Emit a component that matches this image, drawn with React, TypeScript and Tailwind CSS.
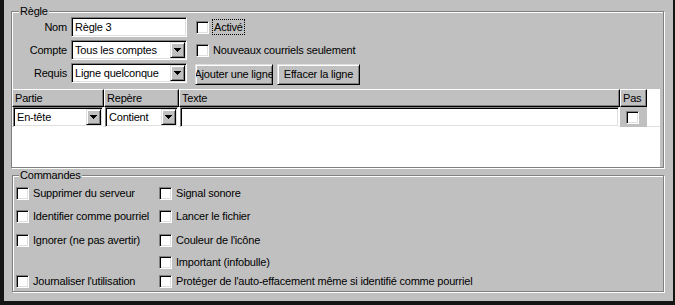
const sunken =
  'border border-t-[#808080] border-l-[#808080] border-b-white border-r-white shadow-[inset_1px_1px_0_#000,inset_-1px_-1px_0_#dfdfdf]';
const raised =
  'border border-t-[#dfdfdf] border-l-[#dfdfdf] border-b-black border-r-black shadow-[inset_1px_1px_0_#fff,inset_-1px_-1px_0_#808080]';
const etched = 'border border-[#808080] shadow-[inset_1px_1px_0_#fff,1px_1px_0_#fff]';

function Check({ className = '' }: { className?: string }) {
  return <span className={`block w-[13px] h-[13px] shrink-0 bg-white ${sunken} ${className}`} />;
}

function Arrow() {
  return (
    <svg width="7" height="4" viewBox="0 0 7 4" shapeRendering="crispEdges">
      <path d="M0 0h7v1h-1v1h-1v1h-1v1h-1v-1h-1v-1h-1v-1h-1z" fill="#000" />
    </svg>
  );
}

function Combo({ value, className = '' }: { value: string; className?: string }) {
  return (
    <div className={`flex h-[20px] bg-white p-[1px] ${sunken} ${className}`}>
      <span className="flex-1 flex items-center pl-[2px] whitespace-nowrap overflow-hidden">{value}</span>
      <span className={`flex items-center justify-center w-[15px] h-full bg-[#c0c0c0] ${raised}`}>
        <Arrow />
      </span>
    </div>
  );
}

function Label({ children }: { children: string }) {
  return <span className="w-[55px] h-[20px] flex items-center justify-end shrink-0">{children}</span>;
}

function Button({ children, width }: { children: string; width: string }) {
  return (
    <div className={`${width} h-[21px] mt-[1px] flex items-center justify-center overflow-hidden whitespace-nowrap bg-[#c0c0c0] ${raised}`}>
      <span className="shrink-0">{children}</span>
    </div>
  );
}

function Option({ label }: { label?: string }) {
  if (!label) return <div className="w-[143px]" />;
  return (
    <div className="w-[143px] h-[13px] flex items-center gap-[4px] whitespace-nowrap">
      <Check />
      <span>{label}</span>
    </div>
  );
}

const commandes: [string | undefined, string, string][] = [
  ['Supprimer du serveur', 'Signal sonore', 'h-[23px]'],
  ['Identifier comme pourriel', 'Lancer le fichier', 'h-[24px]'],
  ['Ignorer (ne pas avertir)', "Couleur de l'icône", 'h-[22px]'],
  [undefined, 'Important (infobulle)', 'h-[19px]'],
  ["Journaliser l'utilisation", "Protéger de l'auto-effacement même si identifié comme pourriel", 'h-[13px]'],
];

export default function App() {
  return (
    <div className="w-[675px] h-[305px] overflow-hidden bg-[#c0c0c0] border-l-4 border-b-4 border-r-2 border-[#151515] pt-[11px] pl-[7px] pr-[9px] text-[11px] leading-[13px] tracking-[-0.2px] text-black font-['Liberation_Sans',Arial,sans-serif]">
      {/* Règle */}
      <div className={`relative ${etched} pt-[5px]`}>
        <span className="absolute top-[-7px] left-[7px] px-[1px] bg-[#c0c0c0]">Règle</span>

        <div className="flex items-center h-[20px]">
          <Label>Nom</Label>
          <div className={`ml-[4px] w-[116px] h-[20px] flex items-center pl-[3px] bg-white ${sunken}`}>Règle 3</div>
          <Check className="ml-[9px]" />
          <span className="ml-[3px] px-[1px] leading-[14px] border border-dotted border-black">Activé</span>
        </div>

        <div className="flex items-center h-[20px] mt-[3px]">
          <Label>Compte</Label>
          <Combo value="Tous les comptes" className="ml-[4px] w-[116px]" />
          <Check className="ml-[9px]" />
          <span className="ml-[4px]">Nouveaux courriels seulement</span>
        </div>

        <div className="flex items-start h-[22px] mt-[3px]">
          <Label>Requis</Label>
          <Combo value="Ligne quelconque" className="ml-[4px] w-[116px]" />
          <div className="ml-[8px] flex gap-[4px]">
            <Button width="w-[78px]">Ajouter une ligne</Button>
            <Button width="w-[83px]">Effacer la ligne</Button>
          </div>
        </div>

        <div className="mt-[4px] mr-[3px] h-[78px] bg-white flex flex-col">
          <div className="flex h-[18px] shrink-0">
            {[
              ['Partie', 'w-[92px]'],
              ['Repère', 'w-[75px]'],
              ['Texte', 'w-[441px]'],
              ['Pas', 'w-[27px]'],
            ].map(([t, w]) => (
              <div
                key={t}
                className={`${w} h-full flex items-center pl-[2px] bg-[#c0c0c0] border border-t-white border-l-white border-r-black border-b-black shadow-[inset_-1px_-1px_0_#808080]`}
              >
                {t}
              </div>
            ))}
          </div>
          <div className="flex h-[20px] border-b border-[#dfdfdf]">
            <div className="w-[92px] px-[1px]">
              <Combo value="En-tête" className="w-full" />
            </div>
            <div className="w-[75px] px-[1px]">
              <Combo value="Contient" className="w-full" />
            </div>
            <div className="w-[441px] px-[1px]">
              <div className={`h-[20px] bg-white ${sunken}`} />
            </div>
            <div className="w-[27px] h-[20px] bg-[#c0c0c0] flex items-center pl-[6px]">
              <Check />
            </div>
          </div>
        </div>
      </div>

      {/* Commandes */}
      <div className={`relative ml-[1px] mt-[7px] h-[117px] ${etched} pl-[3px] pt-[11px]`}>
        <span className="absolute top-[-7px] left-[6px] px-[1px] bg-[#c0c0c0]">Commandes</span>
        {commandes.map(([a, b, h], i) => (
          <div key={i} className={`flex items-start ${h}`}>
            <Option label={a} />
            <Option label={b} />
          </div>
        ))}
      </div>
    </div>
  );
}
